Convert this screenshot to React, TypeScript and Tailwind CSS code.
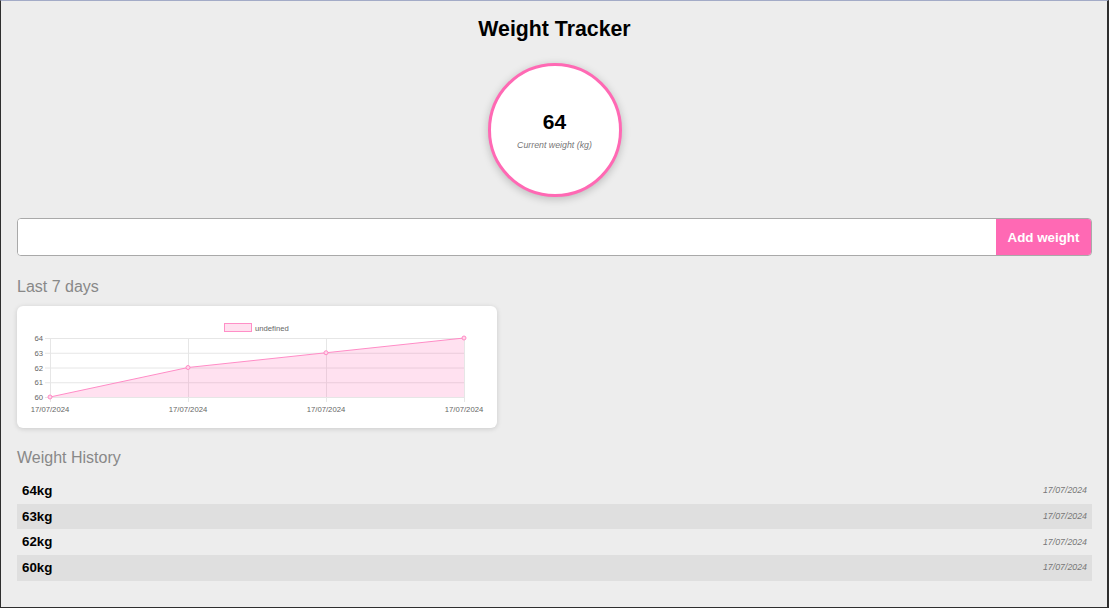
import React from "react";

const points = [
  { x: 33, v: 60 },
  { x: 171, v: 62 },
  { x: 309, v: 63 },
  { x: 447, v: 64 },
];
const yOf = (v: number) => 91 - (v - 60) * 14.75;

function Chart() {
  const line = points.map((p, i) => `${i === 0 ? "M" : "L"}${p.x} ${yOf(p.v)}`).join(" ");
  const area = `${line} L447 91 L33 91 Z`;
  return (
    <svg width="480" height="122" viewBox="0 0 480 122" className="block">
      <rect x="207.5" y="17.5" width="27" height="8" fill="#ffe0ef" stroke="#ff8fc7" strokeWidth="1" />
      <text x="238" y="24.5" fontSize="7.7" fill="#666" fontFamily="'Liberation Sans', Arial, sans-serif">undefined</text>
      {[60, 61, 62, 63, 64].map((v) => (
        <g key={v}>
          <line x1="28" x2="447" y1={yOf(v) + 0.5} y2={yOf(v) + 0.5} stroke="#e6e6e6" strokeWidth="1" />
          <text x="26" y={yOf(v) + 3} fontSize="7.7" fill="#666" textAnchor="end" fontFamily="'Liberation Sans', Arial, sans-serif">{v}</text>
        </g>
      ))}
      {points.map((p) => (
        <g key={p.x}>
          <line x1={p.x + 0.5} x2={p.x + 0.5} y1="32" y2="96" stroke="#e6e6e6" strokeWidth="1" />
          <text x={p.x} y="106" fontSize="7.7" fill="#666" textAnchor="middle" fontFamily="'Liberation Sans', Arial, sans-serif">17/07/2024</text>
        </g>
      ))}
      <path d={area} fill="rgba(255,105,180,0.2)" />
      <path d={line} fill="none" stroke="#ff8cc6" strokeWidth="1" />
      {points.map((p) => (
        <circle key={p.x} cx={p.x} cy={yOf(p.v)} r="2" fill="#ffd6ea" stroke="#ff8cc6" strokeWidth="1" />
      ))}
    </svg>
  );
}

const history = [
  { w: "64kg", d: "17/07/2024" },
  { w: "63kg", d: "17/07/2024" },
  { w: "62kg", d: "17/07/2024" },
  { w: "60kg", d: "17/07/2024" },
];

export default function App() {
  return (
    <div
      className="h-[608px] w-full bg-[#ededed] border-t border-t-[#a3abc7] border-l border-l-[#2e2e2e] border-r-2 border-r-[#2e2e2e] border-b border-b-[#2e2e2e] pl-4 pr-[15px] overflow-hidden"
      style={{ fontFamily: "'Liberation Sans', Arial, sans-serif" }}
    >
      <h1 className="mt-4 text-center text-[21.3px] leading-6 font-bold text-black">Weight Tracker</h1>
      <div className="mt-[22px] flex justify-center">
        <div className="w-[134px] h-[134px] rounded-full bg-white border-[3px] border-[#ff69b4] shadow-[0_2px_8px_rgba(0,0,0,0.22)] flex flex-col items-center justify-center gap-[6px]">
          <div className="text-[21px] leading-6 font-bold text-black">64</div>
          <div className="text-[8.8px] leading-[11px] italic text-[#777]">Current weight (kg)</div>
        </div>
      </div>
      <div className="mt-[21px] h-[38px] flex border border-[#a9a9a9] rounded-[4px] overflow-hidden bg-white">
        <input className="flex-1 outline-none px-2 bg-white" />
        <button className="w-[95px] bg-[#ff69b4] text-white font-bold text-[13.33px] pt-px">Add weight</button>
      </div>
      <div className="mt-[21px] text-base leading-5 text-[#888]">Last 7 days</div>
      <div className="mt-[9px] w-[480px] h-[122px] bg-white rounded-[6px] shadow-[0_1px_5px_rgba(0,0,0,0.15)] overflow-hidden">
        <Chart />
      </div>
      <div className="mt-[20px] text-base leading-5 text-[#888]">Weight History</div>
      <div className="mt-[10px]">
        {history.map((h, i) => (
          <div
            key={i}
            className={`h-[25.7px] flex items-center justify-between px-[5px] ${i % 2 === 1 ? "bg-[#dfdfdf]" : ""}`}
          >
            <span className="text-[13.33px] font-bold text-black">{h.w}</span>
            <span className="text-[8.8px] italic text-[#777]">{h.d}</span>
          </div>
        ))}
      </div>
    </div>
  );
}
